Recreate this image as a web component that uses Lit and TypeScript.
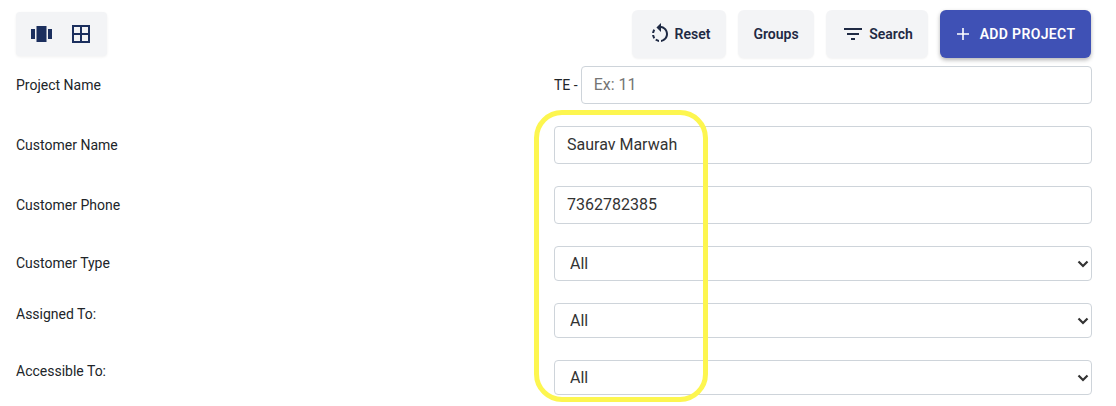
import { LitElement, html, css } from "lit";
import { customElement } from "lit/decorators.js";

const chevron = "data:image/svg+xml," + encodeURIComponent('<svg xmlns="http://www.w3.org/2000/svg" width="12" height="8" viewBox="0 0 12 8"><path d="M1.5 1.5 6 6l4.5-4.5" fill="none" stroke="#333" stroke-width="2.2"/></svg>');

@customElement("app-root")
export class AppRoot extends LitElement {
  static styles = css`
    :host { display: block; position: relative; width: 1116px; height: 406px; overflow: hidden; background: #fff; font-family: Roboto, "Liberation Sans", sans-serif; color: #212529; }
    .toolbar { display: flex; justify-content: space-between; align-items: center; padding: 10px 25px 0 16px; height: 58px; box-sizing: border-box; }
    .toggle { display: flex; align-items: center; gap: 20px; width: 91px; height: 44px; box-sizing: border-box; padding: 0 15px; background: #f3f4f6; border-radius: 4px; box-shadow: 0 1px 3px rgba(0,0,0,.06); }
    .toggle svg { display: block; }
    .actions { display: flex; gap: 12px; }
    .btn { display: flex; align-items: center; justify-content: center; height: 48px; box-sizing: border-box; border: 0; border-radius: 6px; background: #f3f4f6; color: #1f2a44; font: 600 14px Roboto, sans-serif; box-shadow: 0 1px 2px rgba(0,0,0,.05); padding: 0; }
    .reset { width: 94px; gap: 3px; }
    .groups { width: 76px; }
    .search { width: 102px; gap: 4px; }
    .add { width: 151px; gap: 10px; background: #3f51b5; color: #fff; letter-spacing: .35px; box-shadow: 0 2px 4px rgba(0,0,0,.3); }
    .form { display: flex; flex-direction: column; padding: 8px 24.5px 0 16px; }
    .row { display: grid; grid-template-columns: 538px 1fr; align-items: start; height: 60px; }
    .short { height: 57px; }
    .label { font-size: 14px; line-height: 38px; }
    .select-label { line-height: 35px; }
    .raised { line-height: 23px; }
    .prefix { display: flex; align-items: center; gap: 3px; }
    .prefix span { font-size: 14px; white-space: nowrap; }
    .control { display: block; width: 100%; box-sizing: border-box; height: 37.5px; border: 1px solid #ced4da; border-radius: 4px; background: #fff; font: 400 16px Roboto, sans-serif; color: #333; padding: 0 12px; outline: 0; }
    .control::placeholder { color: #757575; opacity: 1; }
    select.control { height: 35px; appearance: none; padding-left: 15px; background-image: var(--chevron); background-repeat: no-repeat; background-position: right 2px center; }
    .highlight { position: absolute; left: 534px; top: 109.5px; width: 174px; height: 292.5px; box-sizing: border-box; border: 5px solid #fdf64f; border-radius: 28px; pointer-events: none; }
  `;

  render() {
    return html`
      <div class="toolbar">
        <div class="toggle">
          <svg width="21" height="16" viewBox="0 0 21 16"><path fill="#1b2f5e" d="M0 3h4v10H0zM5.5 0h10v16h-10zM17 3h4v10h-4z"/></svg>
          <svg width="18" height="18" viewBox="0 0 18 18"><path fill="none" stroke="#1b2f5e" stroke-width="2" d="M1 1h16v16H1zM9 1v16M1 9h16"/></svg>
        </div>
        <div class="actions">
          <button class="btn reset">
            <svg width="24" height="24" viewBox="0 0 24 24" fill="#1f2a44"><path d="M7.11 8.53 5.7 7.11C4.8 8.27 4.24 9.61 4.07 11h2.02c.14-.87.49-1.72 1.02-2.47zM6.09 13H4.07c.17 1.39.72 2.73 1.62 3.89l1.41-1.42c-.52-.75-.87-1.59-1.01-2.47zm1.01 5.32c1.16.9 2.51 1.44 3.9 1.61V17.9c-.87-.15-1.71-.49-2.46-1.03L7.1 18.32zM13 4.07V1L8.45 5.55 13 10V6.09c2.84.48 5 2.94 5 5.91s-2.16 5.43-5 5.91v2.02c3.95-.49 7-3.85 7-7.93s-3.05-7.44-7-7.93z"/></svg>
            Reset
          </button>
          <button class="btn groups">Groups</button>
          <button class="btn search">
            <svg width="24" height="24" viewBox="0 0 24 24" fill="#1f2a44"><path d="M10 18h4v-2h-4v2zM3 6v2h18V6H3zm3 7h12v-2H6v2z"/></svg>
            Search
          </button>
          <button class="btn add">
            <svg width="14" height="14" viewBox="0 0 14 14" fill="#fff"><path d="M6.2 1h1.6v12H6.2zM1 6.2h12v1.6H1z"/></svg>
            ADD PROJECT
          </button>
        </div>
      </div>
      <div class="form" style="--chevron:url('${chevron}')">
        <div class="row"><div class="label">Project Name</div><div class="prefix"><span>TE -</span><input class="control" placeholder="Ex: 11" /></div></div>
        <div class="row"><div class="label">Customer Name</div><input class="control" .value=${"Saurav Marwah"} /></div>
        <div class="row"><div class="label">Customer Phone</div><input class="control" .value=${"7362782385"} /></div>
        <div class="row short"><div class="label select-label">Customer Type</div><select class="control"><option>All</option></select></div>
        <div class="row short"><div class="label raised">Assigned To:</div><select class="control"><option>All</option></select></div>
        <div class="row short"><div class="label raised">Accessible To:</div><select class="control"><option>All</option></select></div>
      </div>
      <div class="highlight"></div>
    `;
  }
}
